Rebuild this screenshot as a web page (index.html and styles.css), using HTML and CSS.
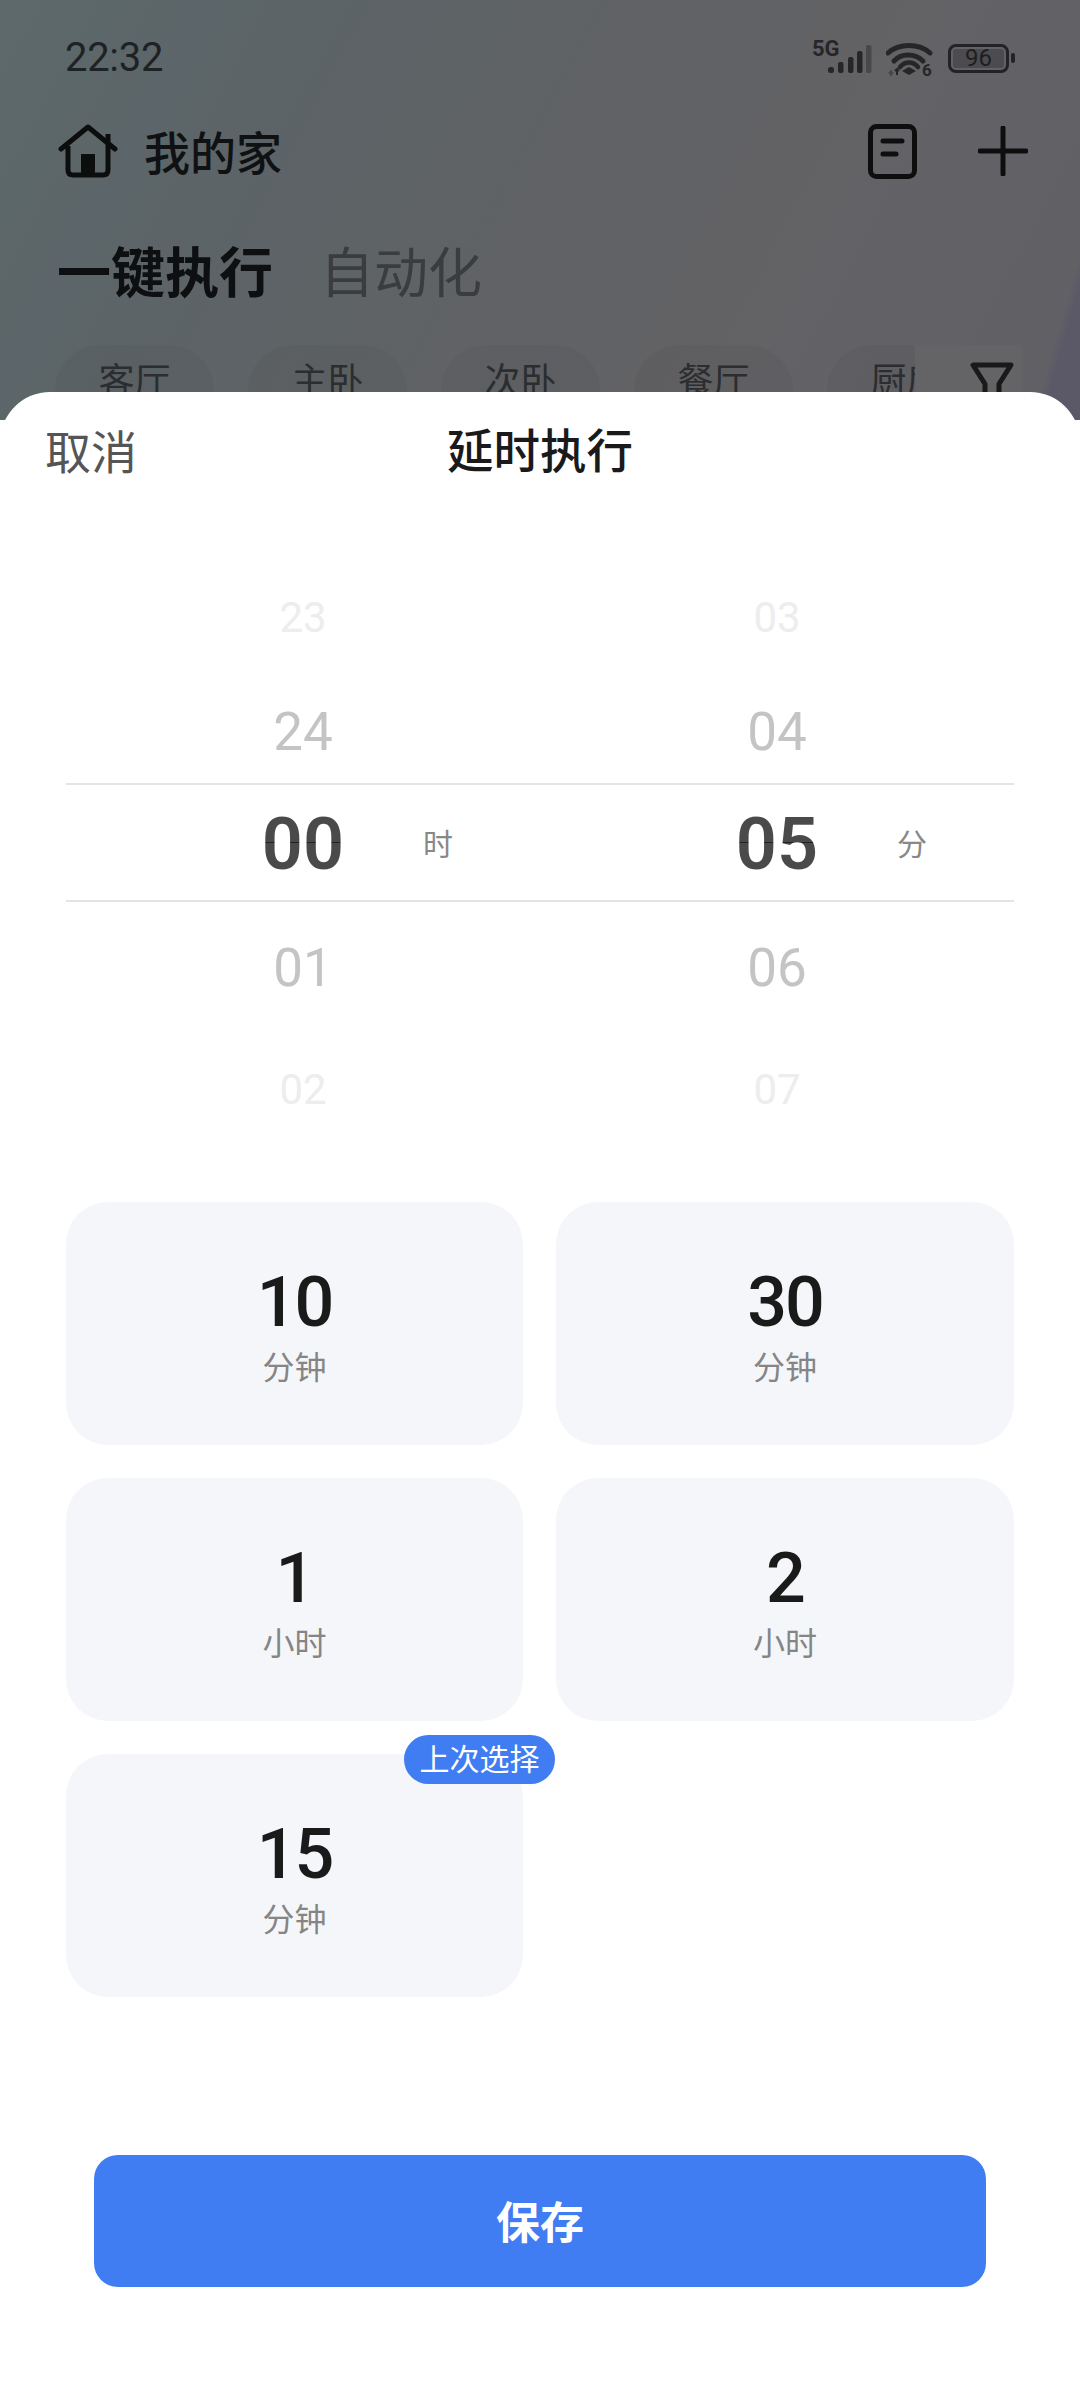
FILE: index.html
```html
<!DOCTYPE html>
<html lang="zh-CN">
<head>
<meta charset="utf-8">
<title>延时执行</title>
<link rel="stylesheet" href="styles.css">
</head>
<body>
<div class="screen">
  <div class="home">
    <div class="status">
      <span class="clock">22:32</span>
      <div class="status-icons">
        <svg width="60" height="48" viewBox="0 -8 60 48">
          <text x="0" y="14" class="five-g">5G</text>
          <rect x="16" y="25" width="6" height="6" rx="2.500" fill="#262628"/>
          <rect x="26" y="20" width="5.500" height="11" rx="2" fill="#262628"/>
          <rect x="36" y="15" width="5.500" height="16" rx="2" fill="#262628"/>
          <rect x="45" y="9" width="5.500" height="22" rx="2" fill="#262628"/>
          <rect x="54" y="3" width="5.500" height="28" rx="2" fill="#48484b"/>
        </svg>
        <svg width="48" height="46" viewBox="0 -8 48 46">
          <path d="M2 10C13 0 33 0 44 10" fill="none" stroke="#262628" stroke-width="5" stroke-linecap="round"/>
          <path d="M8 18C15 10 29 10 37 18" fill="none" stroke="#262628" stroke-width="5" stroke-linecap="round"/>
          <path d="M14 24C19 18 27 18 32 24" fill="none" stroke="#262628" stroke-width="4.500" stroke-linecap="round"/>
          <path d="M23 24L30 28L23 32L16 28Z" fill="#262628"/>
          <path d="M3 29L5 32L7 29M5 32V27" fill="none" stroke="#48484b" stroke-width="2"/>
          <path d="M9 28L11 26L13 28M11 26V32" fill="none" stroke="#262628" stroke-width="2"/>
          <text x="36" y="33" class="wifi-six">6</text>
        </svg>
        <div class="battery">
          <div class="battery-body"><span class="battery-level">96</span></div>
          <span class="battery-tip"></span>
        </div>
      </div>
    </div>
    <div class="home-bar">
      <div class="home-title">
        <svg width="60" height="54" viewBox="0 0 60 54">
          <path d="M3 25L30 3L57 25" fill="none" stroke="#0c0d0d" stroke-width="5" stroke-linecap="round" stroke-linejoin="round"/>
          <path d="M10 22V46Q10 51 15 51H45Q50 51 50 46V10" fill="none" stroke="#0c0d0d" stroke-width="5"/>
          <rect x="23" y="30" width="14" height="20" fill="#0c0d0d"/>
        </svg>
        <span class="home-name">我的家</span>
      </div>
      <div class="home-actions">
        <svg width="49" height="55" viewBox="0 0 49 55">
          <rect x="2.500" y="2.500" width="44" height="50" rx="6" fill="none" stroke="#0e0e0f" stroke-width="5"/>
          <path d="M15 17H34M15 30H28" fill="none" stroke="#0e0e0f" stroke-width="5" stroke-linecap="round"/>
        </svg>
        <svg width="50" height="50" viewBox="0 0 50 50">
          <path d="M25 2V48M2 25H48" fill="none" stroke="#0e0e0f" stroke-width="5" stroke-linecap="round"/>
        </svg>
      </div>
    </div>
    <div class="tabs">
      <span class="tab tab-on">一键执行</span>
      <span class="tab">自动化</span>
    </div>
    <div class="chips">
      <span class="chip">客厅</span>
      <span class="chip">主卧</span>
      <span class="chip">次卧</span>
      <span class="chip">餐厅</span>
      <span class="chip">厨房</span>
      <div class="filter">
        <svg width="44" height="52" viewBox="0 0 44 52">
          <path d="M3 3H41L29 22V50H15V22Z" fill="none" stroke="#19191a" stroke-width="5" stroke-linejoin="round"/>
        </svg>
      </div>
    </div>
  </div>

  <section class="sheet">
    <header class="sheet-head">
      <span class="cancel">取消</span>
      <h1 class="sheet-title">延时执行</h1>
    </header>

    <div class="picker">
      <div class="pick-col">
        <span class="num far">23</span>
        <span class="num near near-top">24</span>
        <div class="num-row"><span class="num cur">00</span><span class="unit">时</span></div>
        <span class="num near near-bottom">01</span>
        <span class="num far far-bottom">02</span>
      </div>
      <div class="pick-col">
        <span class="num far">03</span>
        <span class="num near near-top">04</span>
        <div class="num-row"><span class="num cur">05</span><span class="unit">分</span></div>
        <span class="num near near-bottom">06</span>
        <span class="num far far-bottom">07</span>
      </div>
    </div>

    <div class="presets">
      <div class="preset"><span class="p-num">10</span><span class="p-unit">分钟</span></div>
      <div class="preset"><span class="p-num">30</span><span class="p-unit">分钟</span></div>
      <div class="preset"><span class="p-num">1</span><span class="p-unit">小时</span></div>
      <div class="preset"><span class="p-num">2</span><span class="p-unit">小时</span></div>
      <div class="preset"><span class="p-num">15</span><span class="p-unit">分钟</span><span class="badge">上次选择</span></div>
    </div>

    <button class="save">保存</button>
  </section>
</div>
</body>
</html>
```

FILE: styles.css
```css
* { box-sizing: border-box; margin: 0; padding: 0; }
html, body { width: 1080px; height: 2400px; overflow: hidden; }
body { font-family: Roboto, "Noto Sans CJK SC", sans-serif; background: #fff; }

.screen { position: relative; width: 1080px; height: 2400px; overflow: hidden; }

.home {
  height: 420px;
  padding: 0 58px;
  background:
    linear-gradient(106deg, rgba(91,89,104,0) 96%, #5b5968 96.800%),
    linear-gradient(118deg, #5d696b 0%, #5c6468 24%, #5f6366 40%, #636265 72%, #616066 100%);
  overflow: hidden;
}

.status { height: 116px; display: flex; justify-content: space-between; align-items: center; padding-left: 7px; }
.clock { font-size: 40px; font-weight: 400; line-height: 116px; color: #1f2224; letter-spacing: -.3px; }
.status-icons { display: flex; align-items: center; gap: 14px; margin-right: 7px; }
.status-icons svg { display: block; }
.five-g { font: 700 22px Roboto, sans-serif; fill: #262628; }
.wifi-six { font: 700 17px Roboto, sans-serif; fill: #262628; }
.battery { display: flex; align-items: center; gap: 2px; }
.battery-body { width: 61px; height: 29px; border: 3.500px solid #232325; border-radius: 8px; padding: 2px; }
.battery-level { display: block; height: 100%; background: #4c4c50; border-radius: 3px; font-size: 24px; line-height: 18px; text-align: center; color: #1e1e20; }
.battery-tip { width: 4px; height: 10px; background: #232325; border-radius: 2px; }

.home-bar { height: 74px; margin-top: -2px; display: flex; justify-content: space-between; align-items: center; }
.home-title { display: flex; align-items: center; gap: 26px; font-size: 46px; font-weight: 500; color: #101112; }
.home-name { padding-bottom: 3px; }
.home-actions { display: flex; align-items: center; gap: 61px; margin-right: -6px; }

.tabs { display: flex; gap: 47px; margin-top: 52px; height: 70px; align-items: center; }
.tab { font-size: 54px; font-weight: 400; color: #3a3c3e; line-height: 70px; }
.tab-on { font-size: 54px; font-weight: 700; color: #0d0f10; margin-left: -1px; }

.chips { position: relative; display: flex; gap: 34px; margin: 35px 0 0 -3px; overflow: hidden; }
.chip { flex: none; width: 159px; height: 90px; border-radius: 45px; background: rgba(0,0,0,.03); color: #2b2d2f; font-size: 36px; line-height: 74px; text-align: center; }
.filter { position: absolute; right: 0; top: 0; width: 107px; height: 90px; padding: 17px 0 0 55px; background: #646466; }
.filter svg { display: block; }

.sheet {
  position: absolute; left: 0; right: 0; top: 392px; bottom: 0;
  background: #fff; border-radius: 50px 50px 0 0;
  padding: 0 66px;
}
.sheet-head { position: relative; height: 120px; display: flex; justify-content: center; align-items: center; }
.sheet-title { font-size: 46.500px; font-weight: 500; color: #1a1a1a; line-height: 120px; }
.cancel { position: absolute; left: -21px; top: 1px; font-size: 46px; line-height: 120px; color: #555; }

.picker { display: grid; grid-template-columns: 474px 474px; margin-top: 81px; }
.pick-col { display: flex; flex-direction: column; align-items: center; }
.num { font-family: Roboto, sans-serif; display: block; text-align: center; }
.far { font-size: 42px; line-height: 50px; color: #ededed; }
.near { font-size: 53px; line-height: 60px; color: #c4c4c4; }
.near-top { margin-top: 59px; }
.near-bottom { margin-top: 36px; }
.far-bottom { margin-top: 67px; }
.num-row { position: relative; width: 100%; height: 119px; margin-top: 21px; display: flex; justify-content: center; align-items: center; border-top: 2px solid #e4e4e4; border-bottom: 2px solid #e4e4e4; }
.cur {
  font-size: 72px; font-weight: 600; line-height: 86px; margin-top: 5px; color: transparent;
  background: linear-gradient(#4a4a4a 40px, #222 40px, #222 41px, #4a4a4a 41px);
  -webkit-background-clip: text; background-clip: text;
}
.unit { position: absolute; left: 357px; top: 39px; font-size: 30px; line-height: 36px; color: #888; font-family: "Noto Sans CJK SC", sans-serif; }

.presets { display: grid; grid-template-columns: 457px 458px; column-gap: 33px; row-gap: 33px; margin-top: 87px; grid-auto-rows: 243px; }
.preset { position: relative; background: #f5f6fa; border-radius: 42px; display: flex; flex-direction: column; align-items: center; }
.p-num { font-size: 70px; font-weight: 500; letter-spacing: -2px; color: #1a1a1a; line-height: 70px; margin-top: 65px; }
.p-unit { font-size: 32px; font-weight: 400; color: #858585; line-height: 40px; margin-top: 11px; }
.badge { position: absolute; right: -32px; top: -19px; width: 151px; height: 49px; border-radius: 25px; background: #407cf2; color: #fff; font-size: 30px; line-height: 49px; text-align: center; }

.save { display: block; width: 892px; height: 132px; margin: 158px 0 0 28px; padding-bottom: 3px; border: 0; border-radius: 24px; background: #407cf2; color: #fff; font-family: inherit; font-size: 44px; font-weight: 700; }
```
